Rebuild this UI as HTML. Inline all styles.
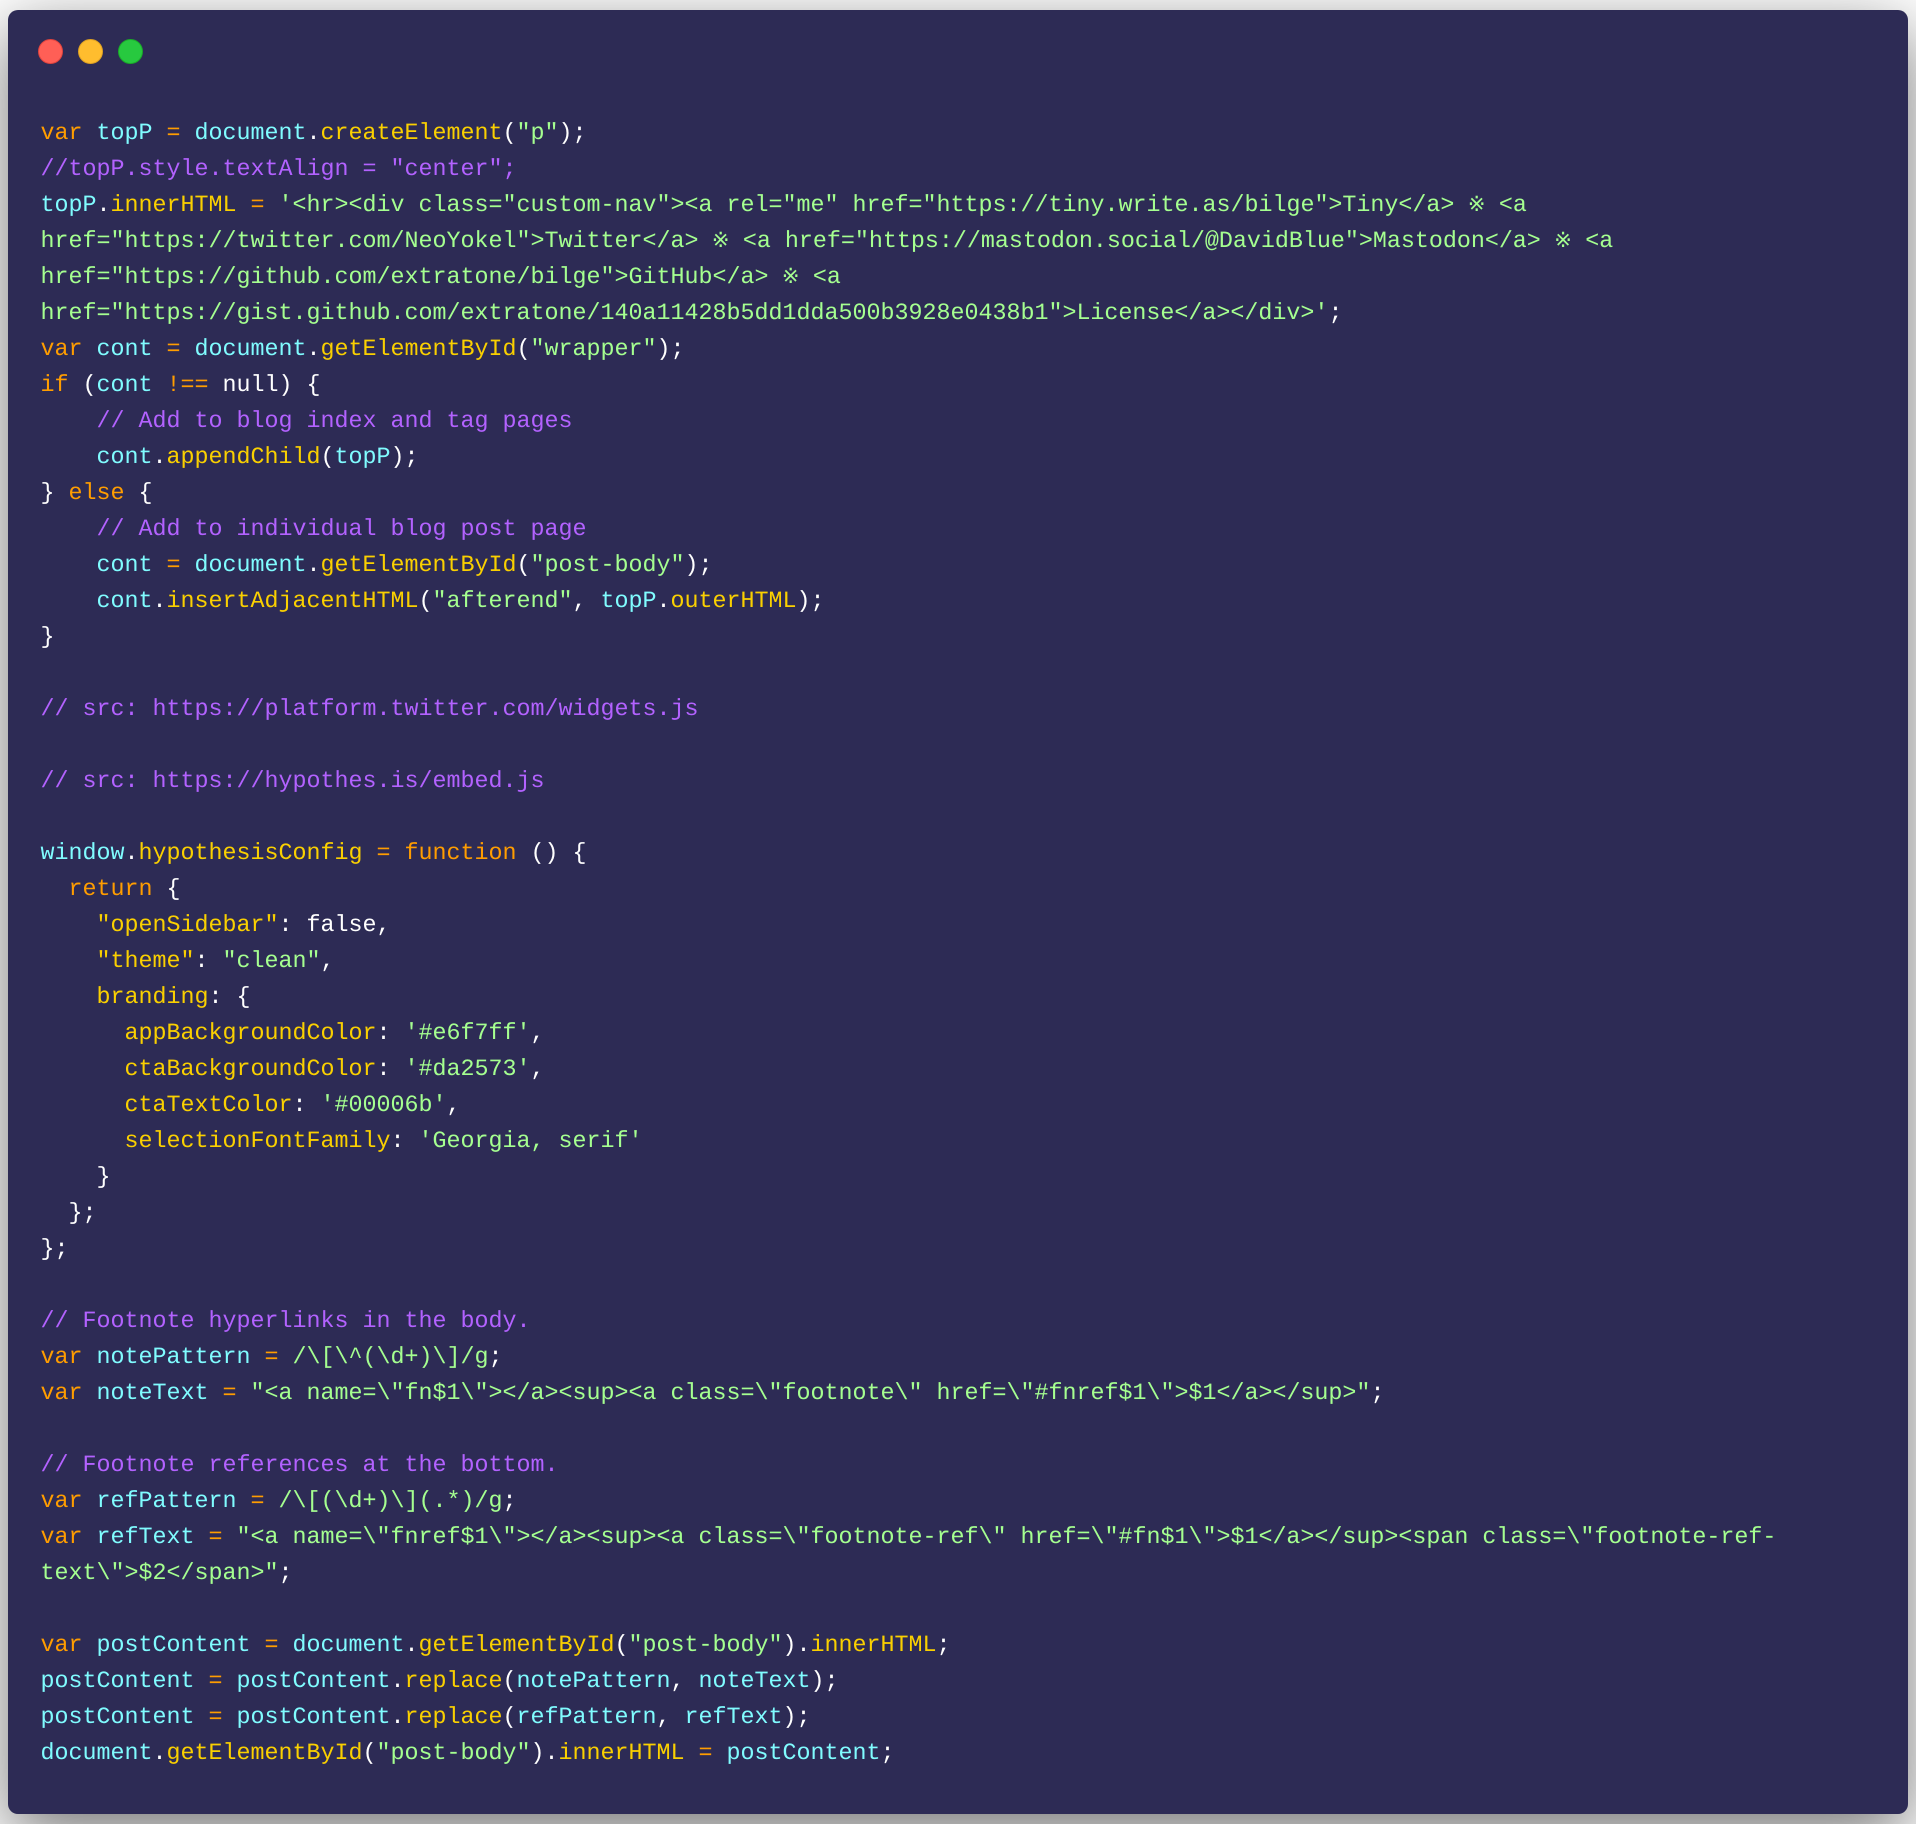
<!DOCTYPE html>
<html><head><meta charset="utf-8"><title>Code</title>
<style>
html,body{margin:0;padding:0;width:1916px;height:1824px;background:#fff;overflow:hidden}
.win{position:absolute;left:8px;top:10px;width:1900px;height:1804px;background:#2d2b55;border-radius:10px;box-shadow:0 20px 68px rgba(0,0,0,.55)}
.d{position:absolute;top:29.2px;width:25px;height:25px;border-radius:50%;box-sizing:border-box}
pre{position:absolute;left:40.5px;top:116px;margin:0;font:23.33px/36px "Liberation Mono","Noto Sans CJK JP",monospace;color:#fff;white-space:pre;text-rendering:geometricPrecision;-webkit-font-smoothing:antialiased}
.k{color:#ff9d00}.c{color:#80fcff}.f{color:#fad000}.m{color:#b362ff}.g{color:#a5ff90}
.x{display:inline-block;width:16.4px;text-align:center;font:21px/0 "DejaVu Sans Mono","DejaVu Sans","Noto Sans CJK JP",monospace}
.x i{font-style:normal;display:inline-block;margin:0 -6px}
</style></head><body>
<div class="win">
<div class="d" style="left:29.5px;background:#ff5f56;border:1px solid #e0443e"></div>
<div class="d" style="left:69.5px;background:#ffbd2e;border:1px solid #dea123"></div>
<div class="d" style="left:109.5px;background:#27c93f;border:1px solid #1aab29"></div>
</div>
<pre><span class="k">var</span> <span class="c">topP</span> <span class="k">=</span> <span class="c">document</span>.<span class="f">createElement</span>(<span class="g">"p"</span>);
<span class="m">//topP.style.textAlign = "center";</span>
<span class="c">topP</span>.<span class="f">innerHTML</span> <span class="k">=</span> <span class="g">'&lt;hr&gt;&lt;div class="custom-nav"&gt;&lt;a rel="me" href="https://tiny.write.as/bilge"&gt;Tiny&lt;/a&gt; <span class="x"><i>※</i></span> &lt;a</span>
<span class="g">href="https://twitter.com/NeoYokel"&gt;Twitter&lt;/a&gt; <span class="x"><i>※</i></span> &lt;a href="https://mastodon.social/@DavidBlue"&gt;Mastodon&lt;/a&gt; <span class="x"><i>※</i></span> &lt;a</span>
<span class="g">href="https://github.com/extratone/bilge"&gt;GitHub&lt;/a&gt; <span class="x"><i>※</i></span> &lt;a</span>
<span class="g">href="https://gist.github.com/extratone/140a11428b5dd1dda500b3928e0438b1"&gt;License&lt;/a&gt;&lt;/div&gt;'</span>;
<span class="k">var</span> <span class="c">cont</span> <span class="k">=</span> <span class="c">document</span>.<span class="f">getElementById</span>(<span class="g">"wrapper"</span>);
<span class="k">if</span> (<span class="c">cont</span> <span class="k">!==</span> null) {
    <span class="m">// Add to blog index and tag pages</span>
    <span class="c">cont</span>.<span class="f">appendChild</span>(<span class="c">topP</span>);
} <span class="k">else</span> {
    <span class="m">// Add to individual blog post page</span>
    <span class="c">cont</span> <span class="k">=</span> <span class="c">document</span>.<span class="f">getElementById</span>(<span class="g">"post-body"</span>);
    <span class="c">cont</span>.<span class="f">insertAdjacentHTML</span>(<span class="g">"afterend"</span>, <span class="c">topP</span>.<span class="f">outerHTML</span>);
}

<span class="m">// src: https://platform.twitter.com/widgets.js</span>

<span class="m">// src: https://hypothes.is/embed.js</span>

<span class="c">window</span>.<span class="f">hypothesisConfig</span> <span class="k">=</span> <span class="k">function</span> () {
  <span class="k">return</span> {
    <span class="f">"openSidebar"</span>: false,
    <span class="f">"theme"</span>: <span class="g">"clean"</span>,
    <span class="f">branding</span>: {
      <span class="f">appBackgroundColor</span>: <span class="g">'#e6f7ff'</span>,
      <span class="f">ctaBackgroundColor</span>: <span class="g">'#da2573'</span>,
      <span class="f">ctaTextColor</span>: <span class="g">'#00006b'</span>,
      <span class="f">selectionFontFamily</span>: <span class="g">'Georgia, serif'</span>
    }
  };
};

<span class="m">// Footnote hyperlinks in the body.</span>
<span class="k">var</span> <span class="c">notePattern</span> <span class="k">=</span> <span class="g">/\[\^(\d+)\]/g</span>;
<span class="k">var</span> <span class="c">noteText</span> <span class="k">=</span> <span class="g">"&lt;a name=\"fn$1\"&gt;&lt;/a&gt;&lt;sup&gt;&lt;a class=\"footnote\" href=\"#fnref$1\"&gt;$1&lt;/a&gt;&lt;/sup&gt;"</span>;

<span class="m">// Footnote references at the bottom.</span>
<span class="k">var</span> <span class="c">refPattern</span> <span class="k">=</span> <span class="g">/\[(\d+)\](.*)/g</span>;
<span class="k">var</span> <span class="c">refText</span> <span class="k">=</span> <span class="g">"&lt;a name=\"fnref$1\"&gt;&lt;/a&gt;&lt;sup&gt;&lt;a class=\"footnote-ref\" href=\"#fn$1\"&gt;$1&lt;/a&gt;&lt;/sup&gt;&lt;span class=\"footnote-ref-</span>
<span class="g">text\"&gt;$2&lt;/span&gt;"</span>;

<span class="k">var</span> <span class="c">postContent</span> <span class="k">=</span> <span class="c">document</span>.<span class="f">getElementById</span>(<span class="g">"post-body"</span>).<span class="f">innerHTML</span>;
<span class="c">postContent</span> <span class="k">=</span> <span class="c">postContent</span>.<span class="f">replace</span>(<span class="c">notePattern</span>, <span class="c">noteText</span>);
<span class="c">postContent</span> <span class="k">=</span> <span class="c">postContent</span>.<span class="f">replace</span>(<span class="c">refPattern</span>, <span class="c">refText</span>);
<span class="c">document</span>.<span class="f">getElementById</span>(<span class="g">"post-body"</span>).<span class="f">innerHTML</span> <span class="k">=</span> <span class="c">postContent</span>;</pre>
</body></html>
